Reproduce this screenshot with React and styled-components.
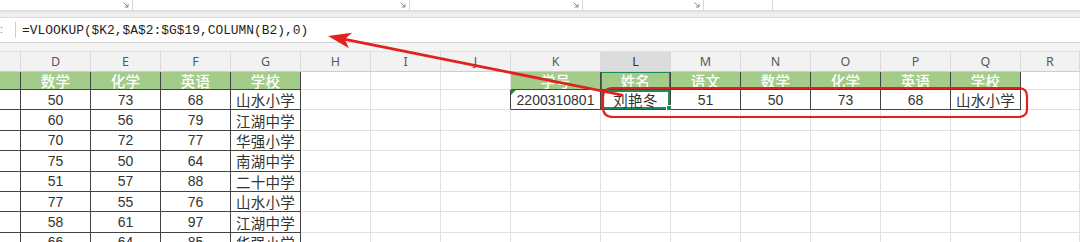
import React from "react";
import styled, { createGlobalStyle } from "styled-components";

const GlobalStyle = createGlobalStyle`
  html, body {
    margin: 0;
    padding: 0;
    background: #fff;
  }
  body {
    width: 1080px;
    height: 242px;
    overflow: hidden;
    font-family: "Liberation Sans", "Noto Sans CJK SC", sans-serif;
  }
`;

const LINE = "#e1e1e1";
const INK = "#444444";
const GREEN = "#a3cb89";
const SELECT = "#1f8a55";
const RED = "#e3201c";

const COLUMNS = [
  { key: "C", width: "21px" },
  { key: "D", width: "70px" },
  { key: "E", width: "70px" },
  { key: "F", width: "70px" },
  { key: "G", width: "70px" },
  { key: "H", width: "70px" },
  { key: "I", width: "70px" },
  { key: "J", width: "70px" },
  { key: "K", width: "90px" },
  { key: "L", width: "70px" },
  { key: "M", width: "70px" },
  { key: "N", width: "70px" },
  { key: "O", width: "70px" },
  { key: "P", width: "70px" },
  { key: "Q", width: "70px" },
  { key: "R", width: "1fr" },
];

const LEFT_TABLE = ["C", "D", "E", "F", "G"];
const RIGHT_TABLE = ["K", "L", "M", "N", "O", "P", "Q"];

const LEFT_HEAD = { D: "数学", E: "化学", F: "英语", G: "学校" };
const LEFT_ROWS = [
  ["50", "73", "68", "山水小学"],
  ["60", "56", "79", "江湖中学"],
  ["70", "72", "77", "华强小学"],
  ["75", "50", "64", "南湖中学"],
  ["51", "57", "88", "二十中学"],
  ["77", "55", "76", "山水小学"],
  ["58", "61", "97", "江湖中学"],
  ["66", "64", "85", "华强小学"],
];

const RIGHT_HEAD = ["学号", "姓名", "语文", "数学", "化学", "英语", "学校"];
const RIGHT_ROW = ["2200310801", "刘艳冬", "51", "50", "73", "68", "山水小学"];

// ribbon group widths (bottom edge of the ribbon that is still visible)
const RIBBON_GROUPS = [
  { width: 133, launcher: true },
  { width: 277, launcher: true },
  { width: 173, launcher: true },
  { width: 121, launcher: true },
  { width: 69, launcher: false },
];

const Page = styled.div`
  position: relative;
  width: 1080px;
  height: 242px;
  overflow: hidden;
  background: #fff;
`;

const Ribbon = styled.div`
  display: flex;
  height: 10px;
  background: #fff;
`;

const RibbonGroup = styled.div`
  width: ${({ $width }) => $width}px;
  display: flex;
  justify-content: flex-end;
  align-items: flex-start;
  padding: 2px 3px 0 0;
  box-sizing: border-box;
  border-right: 1px solid #d6d6d6;
`;

const Band = styled.div`
  height: 7px;
  background: linear-gradient(#d9d9d9, #ececec 40%, #f1f1f1);
`;

const FormulaBar = styled.div`
  display: flex;
  align-items: center;
  height: 26px;
  box-sizing: border-box;
  background: #fff;
  border-top: 1px solid #dcdcdc;
  border-bottom: 1px solid #d2d2d2;
`;

const NameTail = styled.div`
  width: 16px;
  height: 16px;
  box-sizing: border-box;
  border-right: 1px solid #d0d0d0;
  display: flex;
  align-items: center;
  color: #777;
  font-size: 10px;
  line-height: 1;
`;

const Formula = styled.div`
  padding-left: 6px;
  font-family: "Liberation Mono", "Noto Sans CJK SC", monospace;
  font-size: 12.9px;
  color: #1e1e1e;
  white-space: nowrap;
`;

const Gap = styled.div`
  height: 8px;
  background: #f4f4f4;
`;

const Sheet = styled.div`
  display: grid;
  grid-template-columns: ${COLUMNS.map((c) => c.width).join(" ")};
  grid-template-rows: 21px 18px repeat(8, 20.4px);
`;

const ColHead = styled.div`
  display: flex;
  align-items: center;
  justify-content: center;
  box-sizing: border-box;
  background: ${({ $active }) => ($active ? "#dcdcdc" : "#f2f2f2")};
  border-right: 1px solid #dadada;
  border-bottom: 1px solid #cdcdcd;
  border-top: 1px solid #e2e2e2;
  font-family: "Noto Sans", "Liberation Sans", sans-serif;
  font-size: 12.5px;
  color: ${({ $active }) => ($active ? "#333" : "#585858")};
  overflow: hidden;
`;

const Cell = styled.div`
  position: relative;
  display: flex;
  align-items: center;
  justify-content: center;
  box-sizing: border-box;
  overflow: visible;
  white-space: nowrap;
  background: ${({ $tone }) => ($tone === "green" ? GREEN : "#fff")};
  color: ${({ $tone }) => ($tone === "green" ? "#fff" : "#333")};
  font-size: ${({ $tone }) => ($tone === "green" ? "14.5px" : "14px")};
  font-weight: ${({ $tone }) => ($tone === "green" ? 500 : 400)};
  border-right: 1px solid ${({ $darkRight }) => ($darkRight ? INK : LINE)};
  border-bottom: 1px solid ${({ $darkBottom }) => ($darkBottom ? INK : LINE)};
  box-shadow: ${({ $selected, $colActive }) =>
    $selected
      ? `inset 0 0 0 2px ${SELECT}`
      : $colActive
      ? `inset 1px 1px 0 ${SELECT}, inset -1px 0 0 ${SELECT}`
      : "none"};

  &::before {
    content: "";
    display: ${({ $flag }) => ($flag ? "block" : "none")};
    position: absolute;
    left: 0;
    top: 0;
    border-top: 5px solid #2e8b3e;
    border-right: 5px solid transparent;
  }
`;

const Wide = styled.span`
  font-size: 14.5px;
  letter-spacing: 0.3px;
`;

const FillHandle = styled.span`
  position: absolute;
  right: -3px;
  bottom: -3px;
  width: 5px;
  height: 5px;
  background: ${SELECT};
  border: 1px solid #fff;
`;

const Overlay = styled.svg`
  position: absolute;
  left: 0;
  top: 0;
  pointer-events: none;
`;

function Launcher() {
  return (
    <svg width="6" height="6" viewBox="0 0 6 6">
      <path d="M0.5 0.5 L5 5 M5 1.8 V5 H1.8" fill="none" stroke="#7a7a7a" strokeWidth="0.9" />
    </svg>
  );
}

function cellFor(col, row) {
  const inLeft = LEFT_TABLE.includes(col);
  const rightIdx = RIGHT_TABLE.indexOf(col);
  const cell = { text: "", tone: "plain", darkRight: false, darkBottom: false };

  if (inLeft) {
    cell.darkRight = true;
    cell.darkBottom = true;
    if (row === 1) {
      cell.tone = "green";
      cell.text = LEFT_HEAD[col] || "";
    } else if (col !== "C") {
      const values = LEFT_ROWS[row - 2];
      cell.text = values ? values[LEFT_TABLE.indexOf(col) - 1] : "";
    }
  }

  if (rightIdx >= 0 && row <= 2) {
    cell.darkRight = true;
    cell.darkBottom = true;
    if (row === 1) {
      cell.tone = "green";
      cell.text = RIGHT_HEAD[rightIdx];
    } else {
      cell.text = RIGHT_ROW[rightIdx];
    }
  }

  if (col === "J" && row === 2) cell.darkRight = true;
  if (col === "K" && row === 2) cell.flag = true;
  if (col === "L" && row === 2) cell.selected = true;
  if (col === "L" && row === 1) cell.colActive = true;
  return cell;
}

const ROWS = [1, 2, 3, 4, 5, 6, 7, 8, 9];

export default function App() {
  // arrow from L2 back to the formula text
  const tip = [328, 36];
  const start = [622, 95];
  const dx = start[0] - tip[0];
  const dy = start[1] - tip[1];
  const len = Math.hypot(dx, dy);
  const ux = dx / len;
  const uy = dy / len;
  const base = [tip[0] + ux * 23, tip[1] + uy * 23];
  const px = -uy;
  const py = ux;
  const head = [
    tip,
    [base[0] + px * 8, base[1] + py * 8],
    [tip[0] + ux * 17, tip[1] + uy * 17],
    [base[0] - px * 8, base[1] - py * 8],
  ]
    .map((p) => p.join(","))
    .join(" ");

  return (
    <Page>
      <GlobalStyle />
      <Ribbon>
        {RIBBON_GROUPS.map((g, i) => (
          <RibbonGroup key={i} $width={g.width}>
            {g.launcher && <Launcher />}
          </RibbonGroup>
        ))}
      </Ribbon>
      <Band />
      <FormulaBar>
        <NameTail>:</NameTail>
        <Formula>=VLOOKUP($K2,$A$2:$G$19,COLUMN(B2),0)</Formula>
      </FormulaBar>
      <Gap />
      <Sheet>
        {COLUMNS.map((c) => (
          <ColHead key={c.key} $active={c.key === "L"}>
            {c.key === "C" ? "" : c.key}
          </ColHead>
        ))}
        {ROWS.map((row) =>
          COLUMNS.map((c) => {
            const cell = cellFor(c.key, row);
            const isCjk = /[\u4e00-\u9fff]/.test(cell.text);
            return (
              <Cell
                key={`${c.key}${row}`}
                $tone={cell.tone}
                $darkRight={cell.darkRight}
                $darkBottom={cell.darkBottom}
                $selected={cell.selected}
                $colActive={cell.colActive}
                $flag={cell.flag}
              >
                {isCjk ? <Wide>{cell.text}</Wide> : cell.text}
                {cell.selected && <FillHandle />}
              </Cell>
            );
          })
        )}
      </Sheet>
      <Overlay width="1080" height="242" viewBox="0 0 1080 242">
        <path
          d="M612 88 H1018 Q1027 88 1027 96 V109 Q1027 117 1018 117 H614 Q603 117 603 108 V97 Q603 88 612 88 Z"
          fill="none"
          stroke={RED}
          strokeWidth="2.2"
        />
        <line
          x1={start[0]}
          y1={start[1]}
          x2={tip[0] + ux * 15}
          y2={tip[1] + uy * 15}
          stroke={RED}
          strokeWidth="2.8"
          strokeLinecap="round"
        />
        <polygon points={head} fill={RED} />
      </Overlay>
    </Page>
  );
}
